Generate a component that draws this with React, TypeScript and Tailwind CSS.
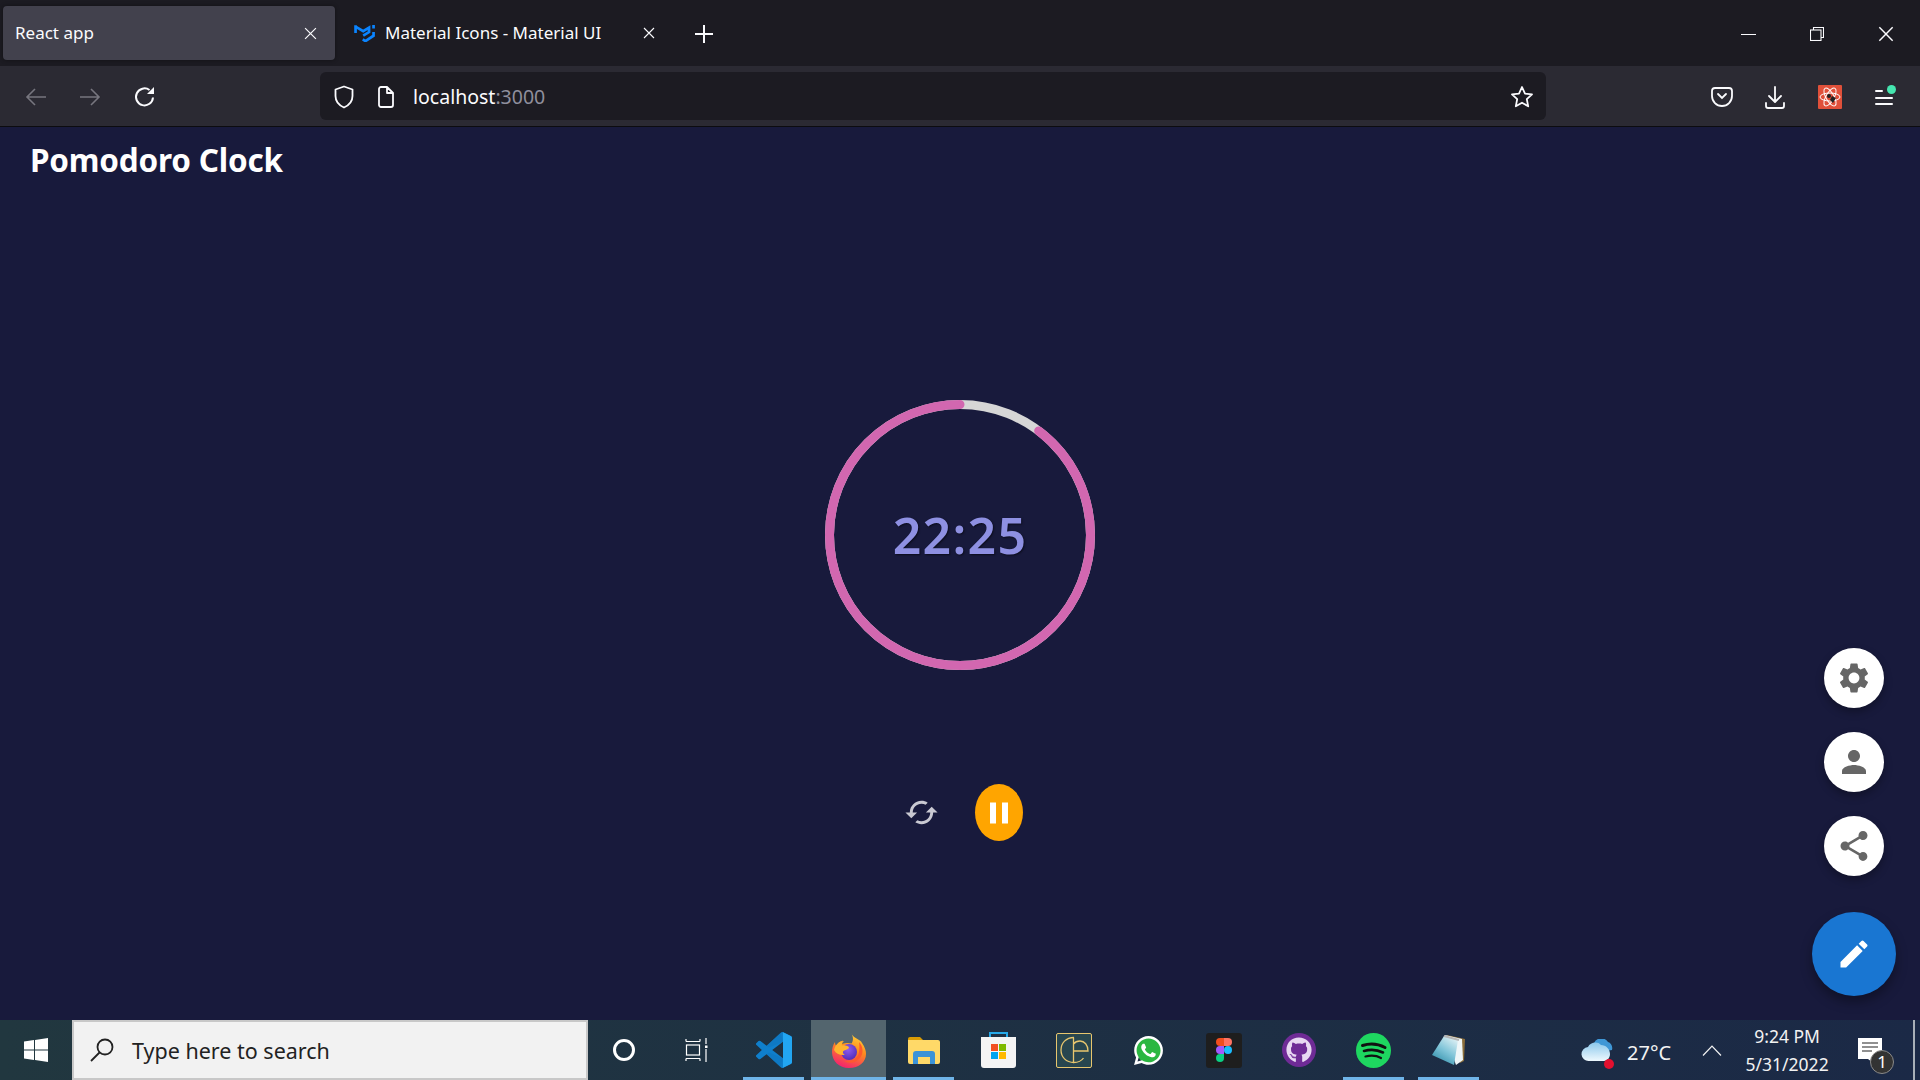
import { FaGithub, FaWhatsapp } from "react-icons/fa";

const Mui = ({ d, className }: { d: string; className?: string }) => (
  <svg viewBox="0 0 24 24" className={className} fill="currentColor">
    <path d={d} />
  </svg>
);

const icons = {
  cached: "m19 8-4 4h3c0 3.31-2.69 6-6 6-1.01 0-1.97-.25-2.8-.7l-1.46 1.46C8.97 19.54 10.43 20 12 20c4.42 0 8-3.58 8-8h3l-4-4zM6 12c0-3.31 2.69-6 6-6 1.01 0 1.97.25 2.8.7l1.46-1.46C15.03 4.46 13.57 4 12 4c-4.42 0-8 3.58-8 8H1l4 4 4-4H6z",
  pause: "M6 19h4V5H6v14zm8-14v14h4V5h-4z",
  settings: "M19.14 12.94c.04-.3.06-.61.06-.94 0-.32-.02-.64-.07-.94l2.03-1.58c.18-.14.23-.41.12-.61l-1.92-3.32c-.12-.22-.37-.29-.59-.22l-2.39.96c-.5-.38-1.03-.7-1.62-.94l-.36-2.54c-.04-.24-.24-.41-.48-.41h-3.84c-.24 0-.43.17-.47.41l-.36 2.54c-.59.24-1.13.57-1.62.94l-2.39-.96c-.22-.08-.47 0-.59.22L2.74 8.87c-.12.21-.08.47.12.61l2.03 1.58c-.05.3-.09.63-.09.94s.02.64.07.94l-2.03 1.58c-.18.14-.23.41-.12.61l1.92 3.32c.12.22.37.29.59.22l2.39-.96c.5.38 1.03.7 1.62.94l.36 2.54c.05.24.24.41.48.41h3.84c.24 0 .44-.17.47-.41l.36-2.54c.59-.24 1.13-.56 1.62-.94l2.39.96c.22.08.47 0 .59-.22l1.92-3.32c.12-.22.07-.47-.12-.61l-2.01-1.58zM12 15.6c-1.98 0-3.6-1.62-3.6-3.6s1.62-3.6 3.6-3.6 3.6 1.62 3.6 3.6-1.62 3.6-3.6 3.6z",
  person: "M12 12c2.21 0 4-1.79 4-4s-1.79-4-4-4-4 1.79-4 4 1.79 4 4 4zm0 2c-2.67 0-8 1.34-8 4v2h16v-2c0-2.66-5.33-4-8-4z",
  share: "M18 16.08c-.76 0-1.44.3-1.96.77L8.91 12.7c.05-.23.09-.46.09-.7s-.04-.47-.09-.7l7.05-4.11c.54.5 1.25.81 2.04.81 1.66 0 3-1.34 3-3s-1.34-3-3-3-3 1.34-3 3c0 .24.04.47.09.7L8.04 9.81C7.5 9.31 6.79 9 6 9c-1.66 0-3 1.34-3 3s1.34 3 3 3c.79 0 1.5-.31 2.04-.81l7.12 4.16c-.05.21-.08.43-.08.65 0 1.61 1.31 2.92 2.92 2.92 1.61 0 2.92-1.31 2.92-2.92s-1.31-2.92-2.92-2.92z",
  edit: "M3 17.25V21h3.75L17.81 9.94l-3.75-3.75L3 17.25zM20.71 7.04c.39-.39.39-1.02 0-1.41l-2.34-2.34a.9959.9959 0 0 0-1.41 0l-1.83 1.83 3.75 3.75 1.83-1.83z",
};

const CloseX = ({ size = 12, className = "" }: { size?: number; className?: string }) => (
  <svg width={size} height={size} viewBox="0 0 12 12" className={className} stroke="currentColor" strokeWidth="1.1" fill="none">
    <path d="M1 1l10 10M11 1L1 11" />
  </svg>
);

const TabStrip = () => (
  <div className="flex h-[66px] items-start bg-[#1c1b22] text-[#fbfbfe]">
    <div className="ml-[3px] mt-[6px] flex h-[54px] w-[332px] items-center justify-between rounded-[4px] bg-[#42414d] pl-[12px] pr-[18px] shadow-[0_0_4px_#0006]">
      <span className="text-[17px]">React app</span>
      <CloseX size={13} />
    </div>
    <div className="ml-[19px] mt-[6px] flex h-[54px] items-center">
      <svg width="22" height="18" viewBox="0 0 24 20" fill="none" stroke="#0a84ff" strokeWidth="3">
        <path d="M1.500 1.500V10M1.500 3l8.500 5 6.500-4V9L10 13" />
        <path d="M21.500 1v4M21.500 9v4l-9 6-3-2" />
      </svg>
      <span className="ml-[9px] w-[258px] text-[17px]">Material Icons - Material UI</span>
      <CloseX size={12} />
    </div>
    <div className="ml-[40px] mt-[25px]">
      <svg width="18" height="18" viewBox="0 0 18 18" stroke="currentColor" strokeWidth="2" fill="none">
        <path d="M9 0v18M0 9h18" />
      </svg>
    </div>
    <div className="ml-auto mr-[26px] mt-[26px] flex items-center gap-[54px]">
      <div className="h-px w-[15px] bg-[#fbfbfe]" />
      <svg width="14" height="14" viewBox="0 0 14 14" stroke="currentColor" fill="none" strokeWidth="1.1">
        <rect x="0.500" y="3" width="10.500" height="10.500" />
        <path d="M3.500 3V.500h10v10H11" />
      </svg>
      <CloseX size={16} />
    </div>
  </div>
);

const Toolbar = () => (
  <div className="flex h-[61px] items-center border-b border-[#0c0c10] bg-[#2b2a33] text-[#fbfbfe]">
    <div className="ml-[25px] mt-[2px] flex w-[295px] items-center">
      <svg width="22" height="20" viewBox="0 0 22 20" fill="none" stroke="#77767f" strokeWidth="1.600">
        <path d="M21 10H2M10 2l-8 8 8 8" />
      </svg>
      <svg className="ml-[32px]" width="22" height="20" viewBox="0 0 22 20" fill="none" stroke="#77767f" strokeWidth="1.600">
        <path d="M1 10h19M12 2l8 8-8 8" />
      </svg>
      <svg className="ml-[32px]" width="24" height="24" viewBox="0 0 24 24" fill="none" stroke="currentColor" strokeWidth="2">
        <path d="M20 12.500A8.500 8.500 0 1 1 16.500 5" />
        <path d="M21 2v7h-7z" fill="currentColor" stroke="none" />
      </svg>
    </div>
    <div className="flex h-[48px] w-[1226px] items-center rounded-[6px] bg-[#1c1b22] pl-[14px] pr-[12px]">
      <svg className="mt-[2px]" width="20" height="24" viewBox="0 0 20 24" fill="none" stroke="currentColor" strokeWidth="1.800">
        <path d="M10 1.500l8.500 3v6.500c0 5.500-4 9.500-8.500 11.500C5.500 20.500 1.500 16.500 1.500 11V4.500z" strokeLinejoin="round" />
      </svg>
      <svg className="ml-[23px] mt-[2px]" width="18" height="22" viewBox="0 0 18 22" fill="none" stroke="currentColor" strokeWidth="1.800">
        <path d="M2 3a2 2 0 0 1 2-2h6l6 6v12a2 2 0 0 1-2 2H4a2 2 0 0 1-2-2zM10 1v6h6" strokeLinejoin="round" />
      </svg>
      <span className="ml-[18px] mt-[2px] text-[19.500px] leading-none">
        localhost<span className="text-[#8f8f9d]">:3000</span>
      </span>
      <svg className="ml-auto mt-[2px]" width="24" height="24" viewBox="0 0 24 24" fill="none" stroke="currentColor" strokeWidth="1.800" strokeLinejoin="round">
        <path d="M12 2l3 6.600 7 .800-5.200 4.800 1.400 7.100L12 17.700l-6.200 3.600 1.400-7.100L2 9.400l7-.800z" />
      </svg>
    </div>
    <div className="mt-[2px] flex flex-1 items-center">
      <svg className="ml-[165px]" width="22" height="20" viewBox="0 0 22 20" fill="none" stroke="currentColor" strokeWidth="1.800">
        <path d="M1 4a3 3 0 0 1 3-3h14a3 3 0 0 1 3 3v5a10 10 0 0 1-20 0z" />
        <path d="M7 7l4 4 4-4" strokeLinecap="round" />
      </svg>
      <svg className="ml-[32px]" width="20" height="23" viewBox="0 0 20 23" fill="none" stroke="currentColor" strokeWidth="1.800" strokeLinecap="round" strokeLinejoin="round">
        <path d="M10 1v14M4 10l6 6 6-6M1 17v3a2 2 0 0 0 2 2h14a2 2 0 0 0 2-2v-3" />
      </svg>
      <svg className="ml-[33px]" width="24" height="24" viewBox="0 0 24 24">
        <rect width="24" height="24" rx="1" fill="#e0503a" />
        <g fill="none" stroke="#fff" strokeWidth="1">
          <ellipse cx="12" cy="12" rx="10" ry="4" />
          <ellipse cx="12" cy="12" rx="10" ry="4" transform="rotate(60 12 12)" />
          <ellipse cx="12" cy="12" rx="10" ry="4" transform="rotate(120 12 12)" />
        </g>
        <circle cx="11" cy="11" r="2" fill="#222" />
        <path d="M12 15l2-4 2 1 2 1-3 5z" fill="#222" />
      </svg>
      <div className="relative ml-[33px] flex h-[16px] w-[18px] flex-col justify-between pt-[1px]">
        <div className="h-[2px] w-[8px] rounded-full bg-[#fbfbfe]" />
        <div className="h-[2px] w-[18px] rounded-full bg-[#fbfbfe]" />
        <div className="h-[2px] w-[18px] rounded-full bg-[#fbfbfe]" />
        <div className="absolute -right-[3px] -top-[4px] h-[9px] w-[9px] rounded-full bg-[#45e6b0]" />
      </div>
    </div>
  </div>
);

const ProgressRing = () => (
  <div className="relative flex h-[270px] w-[270px] items-center justify-center">
    <svg className="absolute inset-0" viewBox="0 0 270 270" fill="none" strokeWidth="9">
      <circle cx="135" cy="135" r="130.500" stroke="#d6d6d6" />
      <circle
        cx="135"
        cy="135"
        r="130.500"
        stroke="#d267b0"
        strokeLinecap="round"
        pathLength={100}
        strokeDasharray="89.700 100"
        strokeDashoffset={-10.3}
        transform="rotate(-90 135 135)"
      />
    </svg>
    <span className="relative text-[50px] font-semibold leading-none tracking-[1.300px] text-[#8e90e2] [text-shadow:1px_1px_2px_#0008]">22:25</span>
  </div>
);

const SpeedAction = ({ d }: { d: string }) => (
  <button className="flex h-[60px] w-[60px] items-center justify-center rounded-full bg-white text-[#666666] shadow-[0_4px_8px_rgba(0,0,0,0.3)]">
    <Mui d={d} className="h-[36px] w-[36px]" />
  </button>
);

const Main = () => (
  <main className="relative flex-1 bg-[#181a3c]">
    <h1 className="pl-[30px] pt-[12px] text-[31.500px] font-bold leading-[41px] tracking-[-0.2px] text-white">Pomodoro Clock</h1>
    <div className="mt-[220px] flex justify-center">
      <ProgressRing />
    </div>
    <div className="mt-[114px] flex items-center justify-center gap-[30px]">
      <button className="flex w-[48px] justify-center text-[#c9c9d2]">
        <Mui d={icons.cached} className="h-[35px] w-[35px]" />
      </button>
      <button className="flex h-[57px] w-[48px] items-center justify-center rounded-[50%] bg-[#ffa500] text-white">
        <Mui d={icons.pause} className="h-[36px] w-[36px]" />
      </button>
    </div>
    <div className="absolute bottom-6 right-6 flex w-[84px] flex-col items-center gap-6">
      <SpeedAction d={icons.settings} />
      <SpeedAction d={icons.person} />
      <SpeedAction d={icons.share} />
      <button className="mt-3 flex h-[84px] w-[84px] items-center justify-center rounded-full bg-[#1976d2] text-white shadow-[0_6px_12px_rgba(0,0,0,0.35)]">
        <Mui d={icons.edit} className="h-[36px] w-[36px]" />
      </button>
    </div>
  </main>
);

const VsCode = () => (
  <svg width="36" height="36" viewBox="0 0 24 24">
    <path fill="#0f7fcc" d="M23.150 2.587L18.210.21a1.494 1.494 0 0 0-1.705.29l-9.460 8.630-4.120-3.128a.999.999 0 0 0-1.276.057L.327 7.261A1 1 0 0 0 .326 8.740L3.899 12 .326 15.260a1 1 0 0 0 .001 1.479L1.650 17.940a.999.999 0 0 0 1.276.057l4.120-3.128 9.460 8.630a1.492 1.492 0 0 0 1.704.29l4.942-2.377A1.500 1.500 0 0 0 24 20.060V3.939a1.500 1.500 0 0 0-.850-1.352zm-5.146 14.861L10.826 12l7.178-5.448v10.896z" />
    <path fill="#22a6f2" d="M18 .1L23.150 2.587A1.500 1.500 0 0 1 24 3.939V20.060A1.500 1.500 0 0 1 23.150 21.413L18 23.900z" />
    <path fill="#0d6fb5" d="M18 6.550l-1.500-6.050-9.460 8.630 1.500 1.200zM18 17.450l-1.500 6.050-9.460-8.630 1.500-1.200z" opacity="0.350" />
  </svg>
);

const Firefox = () => (
  <svg width="34" height="35" viewBox="0 0 34 35">
    <defs>
      <linearGradient id="ffx" x1="0.750" y1="0" x2="0.350" y2="1">
        <stop offset="0" stopColor="#ffd83a" />
        <stop offset="0.450" stopColor="#ff8a1f" />
        <stop offset="1" stopColor="#f5216f" />
      </linearGradient>
      <radialGradient id="ffc" cx="0.450" cy="0.350" r="0.700">
        <stop offset="0" stopColor="#8f5cf0" />
        <stop offset="1" stopColor="#4e2bb5" />
      </radialGradient>
    </defs>
    <path fill="url(#ffx)" d="M19 0c1 3 5 5 8 7 1 .5 2 1 3 3 3 4 4 8 4 11 0 8-7 14-17 14S0 28 0 19c0-4 1-7 3-10 0 2 .500 3 1.500 4 1-3 3.500-5 6.500-5.500-1 1.500-1 2.500-.500 3.500 2-1 6-1.500 9-.500C22 7 21 3 19 0z" />
    <circle cx="17" cy="19" r="8" fill="url(#ffc)" />
    <path fill="#ffb42e" d="M2 17c1-5 5-9 10-9-2 1.500-2.500 3-2 4.500 3-.500 7 .500 7 2.500-2 2-5 2-6 3.500-.500 1.500 1 3 2 3.500-5 .500-9-1-11-5z" />
    <path fill="#ff5a2d" d="M27 9c4 4 5 11 1 16-4 5-11 6-16 3 7 1 14-2 15-9 .500-4 .500-7 0-10z" />
  </svg>
);

const Files = () => (
  <svg width="32" height="27" viewBox="0 0 32 27">
    <path fill="#d99c05" d="M0 2a2 2 0 0 1 2-2h10l3 3v3H0z" />
    <path fill="#ffd968" d="M0 3h30a2 2 0 0 1 2 2v20a2 2 0 0 1-2 2H2a2 2 0 0 1-2-2z" />
    <path fill="#3b93d8" d="M5 27V17a3 3 0 0 1 3-3h16a3 3 0 0 1 3 3v10h-5v-7H10v7z" />
  </svg>
);

const Store = () => (
  <svg width="35" height="36" viewBox="0 0 35 36">
    <path fill="none" stroke="#27a9e8" strokeWidth="2" d="M9 6V1h17v5" />
    <path fill="#f4f4f4" d="M0 5h35v28a3 3 0 0 1-3 3H3a3 3 0 0 1-3-3z" />
    <rect x="10" y="12" width="7" height="7" fill="#f25022" />
    <rect x="18" y="12" width="7" height="7" fill="#7fba00" />
    <rect x="10" y="20" width="7" height="7" fill="#00a4ef" />
    <rect x="18" y="20" width="7" height="7" fill="#ffb900" />
  </svg>
);

const EditorLogo = () => (
  <div className="flex h-[35px] w-[36px] items-center justify-center rounded-[2px] border border-[#e7c66e] bg-[#28464f]">
    <svg width="32" height="30" viewBox="0 0 32 30" fill="none" stroke="#e7c66e" strokeWidth="1.300">
      <path d="M16 2.500C8 2.500 3 8 3 15s5 12.500 13 12.500" />
      <path d="M15.500 2.500v25M15.500 16H30c0-6-3.500-10-8-10-3 0-5 1-6.500 3M15.500 27.500c4.500 0 8-1.500 10-4.500" />
    </svg>
  </div>
);

const Whatsapp = () => (
  <div className="relative flex h-[34px] w-[34px] items-center justify-center">
    <div className="absolute h-[26px] w-[26px] rounded-full bg-[#2bb741]" />
    <FaWhatsapp className="relative h-[33px] w-[33px] text-white" />
  </div>
);

const Figma = () => (
  <div className="flex h-[35px] w-[36px] items-center justify-center rounded-[3px] bg-[#1e1e1e]">
    <svg width="16" height="24" viewBox="0 0 16 24">
      <path fill="#f24e1e" d="M8 0H4a4 4 0 0 0 0 8h4z" />
      <path fill="#ff7262" d="M8 0h4a4 4 0 0 1 0 8H8z" />
      <path fill="#a259ff" d="M8 8H4a4 4 0 0 0 0 8h4z" />
      <circle cx="12" cy="12" r="4" fill="#1abcfe" />
      <path fill="#0acf83" d="M4 16h4v4a4 4 0 1 1-4-4z" />
    </svg>
  </div>
);

const Github = () => (
  <div className="flex h-[34px] w-[34px] items-center justify-center rounded-full bg-[#6f2b96]">
    <FaGithub className="h-[26px] w-[26px] text-[#e8d8f2]" />
  </div>
);

const Spotify = () => (
  <svg width="35" height="35" viewBox="0 0 35 35">
    <circle cx="17.500" cy="17.500" r="17.500" fill="#1ed760" />
    <g fill="none" stroke="#111" strokeLinecap="round">
      <path d="M6.500 12.500c8-2.500 15-2 22.500 2" strokeWidth="3" />
      <path d="M8 18c7-2 13-1.500 19 1.500" strokeWidth="2.600" />
      <path d="M9.500 23.500c6-1.500 11-1 15.500 1.500" strokeWidth="2.200" />
    </g>
  </svg>
);

const Notepad = () => (
  <svg width="33" height="32" viewBox="0 0 33 32">
    <defs>
      <linearGradient id="pad" x1="0.800" y1="0" x2="0.200" y2="1">
        <stop offset="0" stopColor="#e2f2f6" />
        <stop offset="0.500" stopColor="#7fc4d8" />
        <stop offset="1" stopColor="#2a8aa6" />
      </linearGradient>
    </defs>
    <path fill="#8a6d3a" d="M15 1l18 4-1 22-4 2z" />
    <path fill="#eef6f8" d="M13 1l17 4 1 21-7 5z" />
    <path fill="url(#pad)" d="M12 2l14 4-4 25L0 21z" />
    <path stroke="#b5b5b5" strokeWidth="2" d="M12 2l15 4" />
  </svg>
);

const TaskSlot = ({ children, running, active }: { children: React.ReactNode; running?: boolean; active?: boolean }) => (
  <div className={`relative flex h-full w-[75px] shrink-0 items-center justify-center ${active ? "bg-[#53656e]" : ""}`}>
    {children}
    {running && <div className={`absolute bottom-0 h-[3px] bg-[#6fb4e8] ${active ? "inset-x-0" : "left-[7px] right-[7px]"}`} />}
  </div>
);

const Taskbar = () => (
  <footer className="flex h-[60px] shrink-0 items-center bg-linear-to-r from-[#21373f] to-[#1b2946] text-[#f2f2f2]">
    <div className="flex h-full w-[72px] shrink-0 items-center justify-center">
      <svg width="24" height="24" viewBox="0 0 24 24" fill="#fff">
        <path d="M0 3.400l10-1.400v9.500H0zM11 1.900L24 0v11.500H11zM0 12.500h10V22L0 20.600zM11 12.500h13V24l-13-1.900z" />
      </svg>
    </div>
    <div className="flex h-full w-[516px] shrink-0 items-center border-2 border-[#c8c8c8] bg-[#f2f2f2] pl-[15px] text-[#222]">
      <svg width="26" height="26" viewBox="0 0 26 26" fill="none" stroke="#222" strokeWidth="1.800">
        <circle cx="16" cy="10" r="7.500" />
        <path d="M10.500 15.500L2 24" />
      </svg>
      <span className="ml-[17px] mt-[3px] text-[21.500px]">Type here to search</span>
    </div>
    <div className="-ml-[2px] flex h-full shrink-0">
      <TaskSlot>
        <div className="h-[22px] w-[22px] rounded-full border-[3px] border-white" />
      </TaskSlot>
      <TaskSlot>
        <svg className="mr-[4px]" width="24" height="24" viewBox="0 0 24 24" fill="none" stroke="#fff" strokeWidth="1.200">
          <path d="M1 3.500h14M1 1v2.500M15 1v2.500M1 20.500h14M1 23v-2.500M15 23v-2.500" />
          <rect x="1.500" y="7" width="13" height="10" />
          <path d="M21 0v6M21 11v13" />
          <rect x="20" y="7.500" width="2.500" height="2.500" fill="#fff" stroke="none" />
        </svg>
      </TaskSlot>
      <TaskSlot running><VsCode /></TaskSlot>
      <TaskSlot running active><Firefox /></TaskSlot>
      <TaskSlot running><Files /></TaskSlot>
      <TaskSlot><Store /></TaskSlot>
      <TaskSlot><EditorLogo /></TaskSlot>
      <TaskSlot><Whatsapp /></TaskSlot>
      <TaskSlot><Figma /></TaskSlot>
      <TaskSlot><Github /></TaskSlot>
      <TaskSlot running><Spotify /></TaskSlot>
      <TaskSlot running><Notepad /></TaskSlot>
    </div>
    <div className="ml-[95px] flex h-full shrink-0 items-center">
      <div className="relative">
        <svg className="block" width="32" height="23" viewBox="0 0 32 23">
          <defs>
            <linearGradient id="cloud" x1="0" y1="0" x2="0" y2="1">
              <stop offset="0" stopColor="#8cc8ec" />
              <stop offset="1" stopColor="#eef9fe" />
            </linearGradient>
          </defs>
          <path fill="#3f97d6" d="M13 4a8 8 0 0 1 14-1c3 1 5 4 4 8l-6 1z" />
          <path fill="url(#cloud)" d="M8 22a7 7 0 0 1-1-14c2-5 10-6 13-2 5 0 9 4 9 9 0 4-3 7-6 7z" />
        </svg>
        <div className="absolute -bottom-[7px] -right-[1px] h-[10px] w-[10px] rounded-full bg-[#e3102f]" />
      </div>
      <span className="ml-[14px] mt-[6px] text-[20px] leading-none">27°C</span>
      <svg className="ml-[31px]" width="20" height="11" viewBox="0 0 20 11" fill="none" stroke="currentColor" strokeWidth="1.200">
        <path d="M1 10.500L10 1l9 9.500" />
      </svg>
      <div className="ml-[23px] flex w-[84px] flex-col items-center text-[17.500px] leading-[28px]">
        <span>9:24 PM</span>
        <span>5/31/2022</span>
      </div>
      <div className="relative ml-[29px] mt-[4px]">
        <svg className="block" width="24" height="28" viewBox="0 0 24 28" fill="#fff">
          <path d="M0 0h24v21H13l5 6-8-6H0z" />
          <path d="M4 5h16M4 9h16M4 13h10" stroke="#222" strokeWidth="1.200" />
        </svg>
        <div className="absolute -right-[12px] top-[12px] flex h-[24px] w-[24px] items-center justify-center rounded-full border border-[#8a8a8a] bg-[#333333] text-[17px] text-white">1</div>
      </div>
      <div className="ml-[31px] h-full w-[2px] bg-[#a8b0b8]" />
    </div>
  </footer>
);

export default function App() {
  return (
    <div className="flex h-[1080px] w-[1920px] flex-col overflow-hidden [font-family:'Noto_Sans',sans-serif]">
      <TabStrip />
      <Toolbar />
      <Main />
      <Taskbar />
    </div>
  );
}
